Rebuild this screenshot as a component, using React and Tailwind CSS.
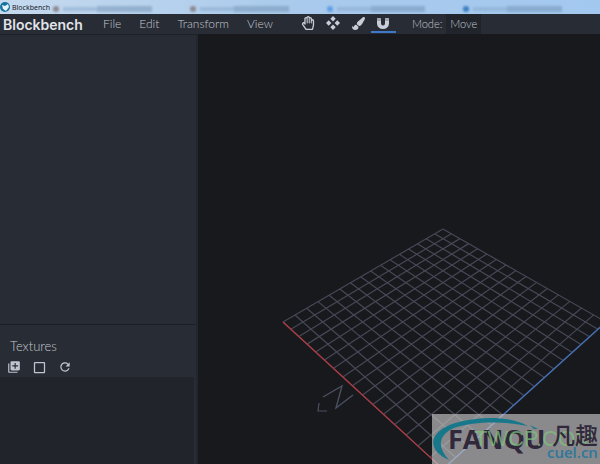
import { MdAddToPhotos, MdCheckBoxOutlineBlank, MdRefresh } from "react-icons/md";
import { FaRegHandPaper, FaPaintBrush } from "react-icons/fa";

const MENUS = ["File", "Edit", "Transform", "View"];

// Corners of the ground plane on screen
const LEFT = [283, 322];
const TOP = [443, 229];
const RIGHT = [606, 322];
const BOTTOM = [443, 469];
const CELLS = 16;

// Maps u,v in 0..1 to the screen: u runs left -> top, v runs left -> bottom
const project = (u, v) => {
  const [x0, y0] = LEFT;
  const [x1, y1] = TOP;
  const [x2, y2] = RIGHT;
  const [x3, y3] = BOTTOM;
  const dx1 = x1 - x2;
  const dx2 = x3 - x2;
  const dx3 = x0 - x1 + x2 - x3;
  const dy1 = y1 - y2;
  const dy2 = y3 - y2;
  const dy3 = y0 - y1 + y2 - y3;
  const det = dx1 * dy2 - dx2 * dy1;
  const g = (dx3 * dy2 - dx2 * dy3) / det;
  const h = (dx1 * dy3 - dx3 * dy1) / det;
  const w = g * u + h * v + 1;
  return [
    ((x1 - x0 + g * x1) * u + (x3 - x0 + h * x3) * v + x0) / w,
    ((y1 - y0 + g * y1) * u + (y3 - y0 + h * y3) * v + y0) / w,
  ];
};

const Line = ({ from, to, color }) => (
  <line x1={from[0]} y1={from[1]} x2={to[0]} y2={to[1]} stroke={color} />
);

const Grid = () => {
  const steps = Array.from({ length: CELLS + 1 }, (_, i) => i / CELLS);
  return (
    <svg
      viewBox="198 34 402 430"
      preserveAspectRatio="xMinYMin slice"
      className="block h-full w-full"
      fill="none"
      strokeWidth="1.2"
    >
      {steps.map((s) => (
        <g key={s}>
          <Line from={project(s, 0)} to={project(s, 1)} color="#464856" />
          <Line from={project(0, s)} to={project(1, s)} color="#464856" />
        </g>
      ))}
      <Line from={LEFT} to={BOTTOM} color="#b3383f" />
      <Line from={RIGHT} to={BOTTOM} color="#4270b8" />
      {/* North marker */}
      <path d="M323 397l19-11-6 22 17-13" stroke="#4b5060" strokeWidth="1.4" />
      <path d="M319 403l-1 8h9" stroke="#4b5060" />
    </svg>
  );
};

const TABS = ["bg-[#8d8a92]", "bg-[#8d8a92]", "bg-[#5f9fe6]", "bg-[#3d7fc0]"];

const TitleBar = () => (
  <header className="flex h-[14px] shrink-0 items-center overflow-hidden bg-linear-to-r from-[#c6daee] via-[#a9caec] to-[#a3c8ef]">
    <svg viewBox="0 0 12 12" className="size-3 shrink-0">
      <circle cx="5" cy="6" r="5" fill="#16729f" />
      <path d="M2 4l3 1 3-2 1 3-3 4-3-2z" fill="#e5f3fa" />
    </svg>
    <span className="shrink-0 font-['Noto_Sans'] text-[7px] leading-none text-[#18202b]">Blockbench</span>
    {/* Window glass with the blurred tabs behind it */}
    <div className="ml-[3px] flex grow pt-[3px] blur-[1px]">
      {TABS.map((dot, i) => (
        <div key={i} className="flex grow items-center gap-1">
          <span className={`size-[6px] rounded-full ${dot}`} />
          <span className="h-1 w-1/4 bg-[#86a6c8]/50" />
          <span className="-ml-1 h-[6px] w-2/5 bg-[#6f8fb2]/50" />
        </div>
      ))}
    </div>
  </header>
);

const tool = "flex h-[18px] w-[25px] items-center justify-center border-b-2";

const MenuBar = () => (
  <nav className="flex h-5 shrink-0 items-center bg-[#282c34] text-[12px] font-light text-[#c3c7d0]">
    <h1 className="w-[94px] pl-[3px] font-[Inter] text-[14px] font-semibold text-[#e1e4ea]">Blockbench</h1>
    {MENUS.map((menu) => (
      <button key={menu} type="button" className="px-[9px]">{menu}</button>
    ))}
    <div className="ml-[14px] flex text-[#c9cdd8]">
      <button type="button" aria-label="Pan" className={`${tool} border-transparent`}>
        <FaRegHandPaper size={14} />
      </button>
      <button type="button" aria-label="Move" className={`${tool} border-transparent`}>
        <svg viewBox="0 0 14 14" className="size-[14px]" fill="currentColor">
          <path d="M7 0l2.7 2.7L7 5.4 4.3 2.7zM7 8.6l2.7 2.7L7 14l-2.7-2.7zM2.7 4.3L5.4 7 2.7 9.7 0 7zM11.3 4.3L14 7l-2.7 2.7L8.6 7z" />
        </svg>
      </button>
      <button type="button" aria-label="Brush" className={`${tool} border-transparent`}>
        <FaPaintBrush size={13} />
      </button>
      <button type="button" aria-label="Snap" className={`${tool} border-[#3e78c8]`}>
        <svg viewBox="0 0 12 11" className="h-[11px] w-3" fill="currentColor">
          <path d="M0 3h4v2.500a2 2 0 004 0V3h4v2.500a6 5.500 0 01-12 0z" />
          <path d="M0 0h4v3H0zM8 0h4v3H8z" opacity=".75" />
        </svg>
      </button>
    </div>
    <span className="ml-4 text-[11px]">Mode:</span>
    <button type="button" className="ml-1 h-5 bg-[#21252b] px-1 text-[11px]">Move</button>
  </nav>
);

const Sidebar = () => (
  <aside className="flex w-[198px] shrink-0 flex-col border-r-2 border-[#23262d] bg-[#282c34]">
    <section className="grow border-t border-[#1d2026]" />
    <section className="flex h-[140px] flex-col border-t border-[#1b1e24]">
      <h2 className="mt-3 pl-[10px] text-[13px] font-light leading-[18px] text-[#c3c7d0]">Textures</h2>
      <div className="flex h-[22px] items-center gap-[11px] pl-[7px] pt-[2px] text-[#c0c4d0]">
        <button type="button" aria-label="Add texture"><MdAddToPhotos size={14} /></button>
        <button type="button" aria-label="Blank texture"><MdCheckBoxOutlineBlank size={15} /></button>
        <button type="button" aria-label="Reload textures"><MdRefresh size={14} /></button>
      </div>
      <div className="mr-[2px] grow bg-[#21252b]" />
    </section>
  </aside>
);

const Watermark = () => (
  <div className="absolute bottom-0 right-0 h-[50px] w-[168px] overflow-hidden bg-[#c8c8c8]/65">
    <svg viewBox="0 0 168 50" className="h-full w-full">
      <path d="M17 46C-10 35-6 6 58 4c18 0 28 3 38 8C76 8 46 6 22 14 6 21 5 33 17 46z" fill="#17788c" />
      <path d="M98 11l8 4-4 0z" fill="#17788c" />
      <text x="16" y="35" fontSize="27" fontWeight="700" fill="#31283b" fontFamily="Open Sans">FANQU</text>
      <text x="42" y="32" fontSize="22" fill="#7cc67a" fontFamily="Liberation Sans" opacity=".7">TWCP.COM</text>
      <text x="120" y="30" fontSize="23" fontWeight="500" fill="#31283b" fontFamily="Noto Sans CJK SC">凡趣</text>
      <text x="115" y="44" fontSize="15" fontWeight="600" fill="#2f779b" fontFamily="Open Sans">cuel.cn</text>
    </svg>
  </div>
);

export default function App() {
  return (
    <div className="flex h-screen flex-col overflow-hidden bg-[#17191d] font-['Lato',sans-serif]">
      <TitleBar />
      <MenuBar />
      <div className="flex min-h-0 grow">
        <Sidebar />
        <main className="relative min-w-0 grow">
          <Grid />
          <Watermark />
        </main>
      </div>
    </div>
  );
}
